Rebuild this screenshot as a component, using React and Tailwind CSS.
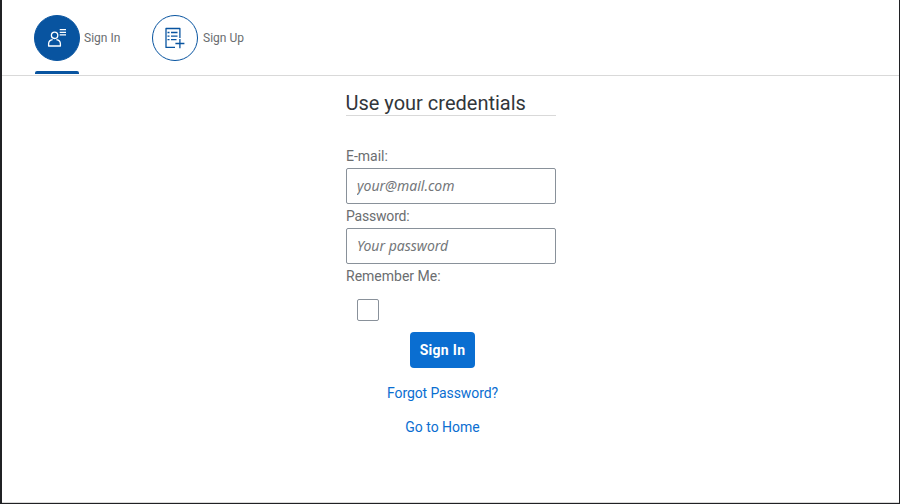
import React from "react";

function Tab({ active, label, width, children }) {
  return (
    <a href="#" className="flex h-[74px] flex-col justify-between pt-[15px]">
      <span className="flex items-center gap-1">
        <span
          className={`flex h-[46px] w-[46px] items-center justify-center rounded-full border border-[#0854a0] ${
            active ? "bg-[#0854a0] text-white" : "bg-white text-[#0854a0]"
          }`}
        >
          {children}
        </span>
        <span className={`whitespace-nowrap text-[12px] leading-4 text-[#6a6d70] ${width}`}>{label}</span>
      </span>
      {active && <span className="ml-px h-[3px] w-[44px] rounded-t-[2px] bg-[#0854a0]" />}
    </a>
  );
}

function PersonIcon() {
  return (
    <svg width="20" height="20" viewBox="0 0 20 20" fill="none" stroke="currentColor" strokeWidth="1.3">
      <circle cx="7.6" cy="7.3" r="3.2" />
      <path d="M5.6 11.6c-2.3 .3-4 2-4 4.300v2.100h11.800v-2.100c0-2.300-1.700-4-4-4.300" strokeLinejoin="round" />
      <path d="M12.700 1.700h6.300M12.700 4.300h6.300M12.700 6.900h6.300" strokeWidth="1.2" />
    </svg>
  );
}

function FormIcon() {
  return (
    <svg width="20" height="22" viewBox="0 0 20 22" fill="none" stroke="currentColor" strokeWidth="1.3">
      <path d="M10 20.400H1V1.500h13.900V11" strokeLinejoin="round" />
      <path d="M2.500 5.500h2M6 5.500h6.500M2.500 9.100h2M6 9.100h6.500M2.500 12.700h2M6 12.700h5.500" />
      <path d="M14.900 12v9.200M10.400 16.500h9" />
    </svg>
  );
}

function Field({ label, type, placeholder, tracking, hint }) {
  return (
    <label className="block">
      <span className={`flex h-6 items-center text-[14px] text-[#6a6d70] ${tracking}`}>{label}</span>
      <input
        type={type}
        placeholder={placeholder}
        className={`block h-9 w-full rounded-[2px] border border-[#89919a] bg-white px-[10px] pb-[2px] font-['Noto_Sans','Open_Sans',sans-serif] text-[14px] italic outline-none placeholder:text-[#74777a] ${hint}`}
      />
    </label>
  );
}

export default function App() {
  return (
    <div className="flex h-[504px] w-[900px] flex-col border-r border-b border-l-2 border-[#202124] bg-white font-['Roboto','Liberation_Sans',sans-serif]">
      <div className="flex flex-1 flex-col border-b border-[#d9d9d9]">
        <nav className="flex h-[76px] gap-[31px] border-b border-[#d9d9d9] pl-8">
          <Tab active label="Sign In" width="w-[37px]">
            <PersonIcon />
          </Tab>
          <Tab label="Sign Up" width="w-[42px] pl-px">
            <FormIcon />
          </Tab>
        </nav>
        <form className="ml-[344px] w-[210px] pt-[15px]">
          <h1 className="flex h-[25px] items-center whitespace-nowrap border-b border-[#d9d9d9] text-[20px] text-[#32363a]">
            <span className="-ml-[0.5px]">Use your credentials</span>
          </h1>
          <div className="pt-7">
            <Field label="E-mail:" type="email" placeholder="your@mail.com" tracking="" hint="tracking-normal" />
            <Field label="Password:" type="password" placeholder="Your password" tracking="tracking-[-0.2px]" hint="tracking-normal" />
            <div className="flex h-6 items-center text-[14px] text-[#6a6d70]">Remember Me:</div>
            <input
              type="checkbox"
              className="mt-[11px] ml-[11px] block h-[22px] w-[22px] appearance-none rounded-[2px] border border-[#89919a] bg-white"
            />
          </div>
          <div className="flex w-[193px] flex-col items-center pt-[11px] text-[14px] text-[#0a6ed1]">
            <button type="button" className="h-9 w-[65px] rounded-[4px] bg-[#0a6ed1] font-bold tracking-[0.3px] text-white">
              Sign In
            </button>
            <a href="#" className="mt-2 flex h-[34px] items-center tracking-[-0.1px]">Forgot Password?</a>
            <a href="#" className="flex h-[34px] items-center">Go to Home</a>
          </div>
        </form>
      </div>
    </div>
  );
}
